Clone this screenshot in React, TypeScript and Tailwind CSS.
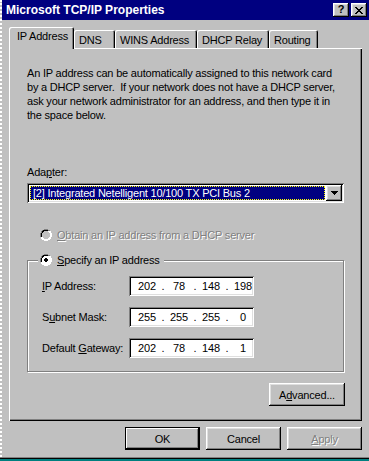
const raised =
  'shadow-[inset_-1px_-1px_#000,inset_1px_1px_#fff,inset_-2px_-2px_#808080,inset_2px_2px_#dfdfdf]';
const sunken =
  'shadow-[inset_1px_1px_#808080,inset_-1px_-1px_#fff,inset_2px_2px_#000,inset_-2px_-2px_#dfdfdf]';
const disabledText = 'text-[#808080] [text-shadow:1px_1px_0_#fff]';

function Radio({ checked, disabled }: { checked?: boolean; disabled?: boolean }) {
  return (
    <svg width="12" height="12" viewBox="0 0 12 12" className="shrink-0">
      <path d="M4 0h4v1h2v1h1v2h1v4h-1v2h-1v1h-2v1h-4v-1h-2v-1h-1v-2h-1v-4h1v-2h1v-1h2z" fill="#fff" />
      <path d="M4 0h4v1h2v1h-2v-1h-4v1h-2v2h-1v4h-1v-4h1v-2h1v-1h2z" fill="#808080" />
      <path d="M4 1h4v1h-4v1h-1v1h-1v4h-1v-4h1v-2h1v-1h0z M2 2h1v1h-1z" fill="#000" />
      <path d="M4 2h4v1h1v1h1v4h-1v1h-1v1h-4v-1h-1v-1h-1v-4h1v-1h1z" fill={disabled ? '#c0c0c0' : '#fff'} />
      {checked && <path d="M5 4h2v1h1v2h-1v1h-2v-1h-1v-2h1z" fill="#000" />}
    </svg>
  );
}

function IpField({ parts }: { parts: string[] }) {
  return (
    <div className={`w-[125px] h-[20px] bg-white flex items-center pl-[6px] ${sunken}`}>
      {parts.map((p, i) => (
        <div key={i} className="flex">
          <span className="w-[24px] text-center">{p}</span>
          {i < 3 && <span className="w-[8px] text-center">.</span>}
        </div>
      ))}
    </div>
  );
}

function Btn({ children, def, disabled }: { children: React.ReactNode; def?: boolean; disabled?: boolean }) {
  return (
    <div
      className={`w-[75px] h-[23px] flex items-center justify-center ${
        def
          ? 'shadow-[inset_0_0_0_1px_#000,inset_-2px_-2px_#000,inset_2px_2px_#fff,inset_-3px_-3px_#808080]'
          : raised
      } ${disabledText && disabled ? disabledText : ''}`}
    >
      {children}
    </div>
  );
}

export default function App() {
  const rows = [
    { label: <><u>I</u>P Address:</>, parts: ['202', '78', '148', '198'] },
    { label: <>S<u>u</u>bnet Mask:</>, parts: ['255', '255', '255', '0'] },
    { label: <>Default <u>G</u>ateway:</>, parts: ['202', '78', '148', '1'] },
  ];

  return (
    <div className="w-[369px] h-[461px] bg-[#c0c0c0] flex flex-col overflow-hidden font-['Liberation_Sans',Arial,sans-serif] text-[11px] leading-[14px] tracking-[-0.2px] text-black">
      <div className="flex flex-1 min-h-0">
        <div className="w-[2px] border-l-2 border-dotted border-white" />
        <div className="flex-1 flex flex-col">
          {/* title bar */}
          <div className="h-[20px] bg-[#000080] flex items-center pl-[4px] pr-[2px]">
            <span className="text-white font-bold text-[12px] tracking-normal">Microsoft TCP/IP Properties</span>
            <div className="ml-auto flex gap-[2px]">
              <div className={`w-[16px] h-[14px] bg-[#c0c0c0] flex items-center justify-center font-bold text-[11px] leading-none pb-[1px] ${raised}`}>?</div>
              <div className={`w-[16px] h-[14px] bg-[#c0c0c0] flex items-center justify-center ${raised}`}>
                <svg width="8" height="7" viewBox="0 0 8 7">
                  <path d="M0 0h2v1h1v1h2v-1h1v-1h2v1h-1v1h-1v1h-1v1h1v1h1v1h1v1h-2v-1h-1v-1h-2v1h-1v1h-2v-1h1v-1h1v-1h1v-1h-1v-1h-1v-1h-1z" fill="#000" />
                </svg>
              </div>
            </div>
          </div>

          {/* tabs */}
          <div className="ml-[7px] mt-[7px] flex items-end h-[21px]">
            <div className="relative z-10 w-[65px] h-[22px] -mb-[1px] bg-[#c0c0c0] rounded-t-[2px] pl-[8px] pt-[2px] shadow-[inset_1px_1px_#fff,inset_-1px_0_#000,inset_-2px_0_#808080]">
              IP Address
            </div>
            {[
              ['DNS', 'w-[41px]'],
              ['WINS Address', 'w-[82px]'],
              ['DHCP Relay', 'w-[72px]'],
              ['Routing', 'w-[49px]'],
            ].map(([t, w]) => (
              <div
                key={t}
                className={`${w} h-[18px] rounded-t-[2px] pl-[5px] pt-[3px] shadow-[inset_1px_1px_#fff,inset_-1px_0_#000,inset_-2px_0_#808080]`}
              >
                {t}
              </div>
            ))}
          </div>

          {/* panel */}
          <div className="ml-[7px] w-[353px] h-[373px] pl-[18px] pr-[18px] pt-[18px] flex flex-col shadow-[inset_1px_1px_#fff,inset_-1px_-1px_#000,inset_-2px_-2px_#808080]">
            <p className="whitespace-pre">
              {'An IP address can be automatically assigned to this network card\nby a DHCP server.  If your network does not have a DHCP server,\nask your network administrator for an address, and then type it in\nthe space below.'}
            </p>

            <div className="mt-[43px]">Ada<u>p</u>ter:</div>
            <div className={`mt-[4px] h-[20px] bg-white flex p-[2px] ${sunken}`}>
              <div className="flex-1 m-[1px] bg-[#000080] text-[#ffffff] border border-dotted border-[#ffff00] pl-[2px] leading-[12px]">
                [2] Integrated Netelligent 10/100 TX PCI Bus 2
              </div>
              <div className={`w-[16px] bg-[#c0c0c0] flex items-center justify-center ${raised}`}>
                <svg width="7" height="4" viewBox="0 0 7 4">
                  <path d="M0 0h7v1h-1v1h-1v1h-1v1h-1v-1h-1v-1h-1v-1h-1z" fill="#000" />
                </svg>
              </div>
            </div>

            <div className={`mt-[25px] pl-[13px] flex items-center gap-[5px] ${disabledText}`}>
              <Radio disabled />
              <span><u>O</u>btain an IP address from a DHCP server</span>
            </div>

            <div className="mt-[18px] border border-[#808080] shadow-[inset_1px_1px_#fff,1px_1px_#fff] flex flex-col pb-[13px]">
              <div className="-mt-[8px] ml-[10px] self-start bg-[#c0c0c0] px-[2px] flex items-center gap-[5px]">
                <Radio checked />
                <span className="pr-[2px]"><u>S</u>pecify an IP address</span>
              </div>
              <div className="mt-[9px] flex flex-col gap-[11px] pl-[14px]">
                {rows.map((r, i) => (
                  <div key={i} className="flex items-center">
                    <div className="w-[87px]">{r.label}</div>
                    <IpField parts={r.parts} />
                  </div>
                ))}
              </div>
            </div>

            <div className="mt-[11px] flex justify-end -mr-[1px]">
              <div className={`w-[76px] h-[23px] flex items-center justify-center ${raised}`}>
                A<u>d</u>vanced...
              </div>
            </div>
          </div>

          {/* dialog buttons */}
          <div className="mt-[6px] pr-[7px] flex justify-end gap-[6px]">
            <Btn def>OK</Btn>
            <Btn>Cancel</Btn>
            <Btn disabled><u>A</u>pply</Btn>
          </div>
        </div>
      </div>
      <div className="h-[1px] bg-[#808080]" />
      <div className="h-[1px] bg-black" />
      <div className="h-[2px] bg-[#008080]" />
    </div>
  );
}
